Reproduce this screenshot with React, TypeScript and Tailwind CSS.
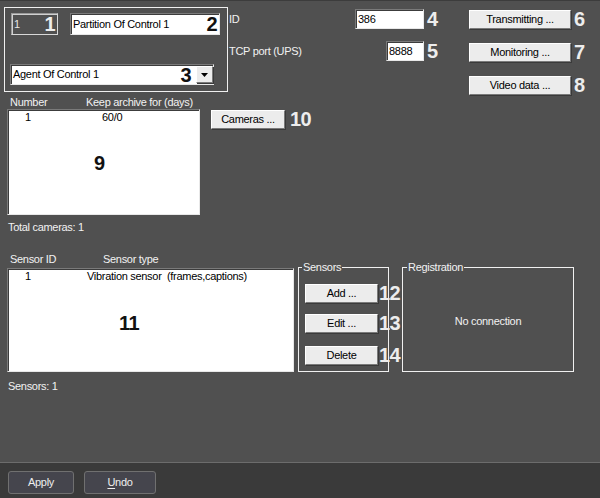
import React from "react";

const sunkenWhite =
  "bg-white border border-t-[#7a7a7a] border-l-[#7a7a7a] border-b-[#e8e8e8] border-r-[#e8e8e8] shadow-[inset_1px_1px_0_#3c3c3c]";
const raised =
  "bg-[#ececec] border border-t-white border-l-white border-b-[#7a7a7a] border-r-[#7a7a7a] shadow-[1px_1px_0_#3a3a3a] text-black flex items-center justify-center shrink-0";

function Num({ children, dark = false, className = "" }: { children: React.ReactNode; dark?: boolean; className?: string }) {
  return (
    <span
      className={
        (dark ? "text-[#111111] " : "text-[#ededed] ") +
        "font-bold text-[20px] leading-[20px] tracking-[-0.5px] shrink-0 " +
        className
      }
    >
      {children}
    </span>
  );
}

export default function App() {
  return (
    <div className="w-[600px] h-[498px] bg-[#505050] flex flex-col overflow-hidden font-['Liberation_Sans',Arial,sans-serif] text-[11px] leading-[13px] tracking-[-0.3px] text-[#f2f2f2]">
      <div className="h-px bg-[#3c3c3c] shrink-0" />
      <div className="flex-1 flex flex-col">
        {/* Row A */}
        <div className="flex items-start h-[92px] shrink-0">
          <div className="mt-[6px] ml-[4px] w-[224px] h-[85px] border border-[#f0f0f0] flex flex-col pl-[6px] pt-[5px] shrink-0">
            <div className="flex gap-[12px]">
              <div className="w-[47px] h-[22px] bg-[#505050] border border-t-[#9a9a9a] border-l-[#9a9a9a] border-b-[#d8d8d8] border-r-[#d8d8d8] shadow-[inset_1px_1px_0_#d0d0d0] flex items-center justify-between pl-[2px] pr-[2px]">
                <span className="text-[#e6e6e6]">1</span>
                <Num>1</Num>
              </div>
              <div className={sunkenWhite + " w-[150px] h-[22px] flex items-center justify-between pl-[2px] pr-[2px] text-black"}>
                <span>Partition Of Control 1</span>
                <Num dark>2</Num>
              </div>
            </div>
            <div className={sunkenWhite + " mt-[29px] -ml-[1px] w-[204px] h-[21px] flex items-center pl-[2px] text-black"}>
              <span className="flex-1">Agent Of Control 1</span>
              <Num dark>3</Num>
              <div className={raised + " ml-[5px] w-[17px] h-[17px]"}>
                <svg width="7" height="4" viewBox="0 0 7 4">
                  <path d="M0 0H7L3.5 4Z" fill="#000" />
                </svg>
              </div>
            </div>
          </div>

          <div className="ml-[1px] mt-[8px] w-[212px] flex flex-col gap-[12px] shrink-0">
            <div className="flex items-center h-[20px]">
              <span className="flex-1">ID</span>
              <div className={sunkenWhite + " w-[69px] h-[20px] pl-[2px] text-black flex items-center"}>386</div>
              <Num className="ml-[3px] w-[14px]">4</Num>
            </div>
            <div className="flex items-center h-[20px]">
              <span className="flex-1">TCP port (UPS)</span>
              <div className={sunkenWhite + " w-[38px] h-[20px] pl-[2px] text-black flex items-center"}>8888</div>
              <Num className="ml-[3px] w-[14px]">5</Num>
            </div>
          </div>

          <div className="ml-[28px] mt-[8px] flex flex-col gap-[13px]">
            <div className="flex items-center">
              <div className={raised + " w-[102px] h-[19px]"}>Transmitting ...</div>
              <Num className="ml-[3px]">6</Num>
            </div>
            <div className="flex items-center">
              <div className={raised + " w-[102px] h-[19px]"}>Monitoring ...</div>
              <Num className="ml-[3px]">7</Num>
            </div>
            <div className="flex items-center">
              <div className={raised + " w-[102px] h-[19px]"}>Video data ...</div>
              <Num className="ml-[3px]">8</Num>
            </div>
          </div>
        </div>

        {/* Row B: cameras */}
        <div className="flex items-start pl-[7px] shrink-0">
          <div className="w-[193px] flex flex-col shrink-0">
            <div className="h-[16px] pt-[3px] flex">
              <span className="w-[79px] pl-[3px]">Number</span>
              <span>Keep archive for (days)</span>
            </div>
            <div className={sunkenWhite + " relative h-[106px] text-black"}>
              <div className="flex pt-[1px]">
                <span className="w-[94px] pl-[17px]">1</span>
                <span>60/0</span>
              </div>
              <Num dark className="absolute left-[86px] top-[43px]">9</Num>
            </div>
            <div className="mt-[6px] pl-[1px]">Total cameras: 1</div>
          </div>
          <div className="ml-[11px] mt-[16px] flex items-center">
            <div className={raised + " w-[74px] h-[19px]"}>Cameras ...</div>
            <Num className="ml-[5px]">10</Num>
          </div>
        </div>

        {/* Row C: sensors */}
        <div className="flex items-start pl-[7px] mt-[19px] shrink-0">
          <div className="w-[287px] flex flex-col shrink-0">
            <div className="h-[15px] flex">
              <span className="w-[96px] pl-[3px]">Sensor ID</span>
              <span>Sensor type</span>
            </div>
            <div className={sunkenWhite + " relative h-[104px] text-black"}>
              <div className="flex pt-[1px]">
                <span className="w-[79px] pl-[17px]">1</span>
                <span className="whitespace-pre">Vibration sensor  (frames,captions)</span>
              </div>
              <Num dark className="absolute left-[111px] top-[44px]">11</Num>
            </div>
            <div className="mt-[8px] pl-[1px]">Sensors: 1</div>
          </div>

          <div className="relative ml-[4px] mt-[14px] w-[91px] h-[105px] border border-[#f0f0f0] flex flex-col pl-[6px] shrink-0">
            <span className="absolute left-[3px] top-[-7px] px-[1px] bg-[#505050]">Sensors</span>
            <div className="flex items-center mt-[15px]">
              <div className={raised + " w-[73px] h-[19px]"}>Add ...</div>
              <Num className="ml-[1px] relative">12</Num>
            </div>
            <div className="flex items-center mt-[10px]">
              <div className={raised + " w-[73px] h-[19px]"}>Edit ...</div>
              <Num className="ml-[1px] relative">13</Num>
            </div>
            <div className="flex items-center mt-[12px]">
              <div className={raised + " w-[73px] h-[19px]"}>Delete</div>
              <Num className="ml-[1px] relative">14</Num>
            </div>
          </div>

          <div className="relative ml-[13px] mt-[14px] w-[172px] h-[105px] border border-[#f0f0f0] flex items-center justify-center pt-[3px] shrink-0">
            <span className="absolute left-[4px] top-[-7px] px-[1px] bg-[#505050]">Registration</span>
            <span>No connection</span>
          </div>
        </div>
      </div>

      {/* Footer */}
      <div className="h-[36px] shrink-0 border-t border-[#6c6c6c] bg-[#3a3a3a] flex items-start pt-[8px] pl-[8px] gap-[10px]">
        <button className="w-[66px] h-[23px] bg-[#45454d] border border-[#707070] rounded-[3px] text-[#eeeeee] text-[11px] flex items-center justify-center">
          Apply
        </button>
        <button className="w-[72px] h-[23px] bg-[#45454d] border border-[#707070] rounded-[3px] text-[#eeeeee] text-[11px] flex items-center justify-center">
          <span>
            <span className="underline underline-offset-2">U</span>ndo
          </span>
        </button>
      </div>
    </div>
  );
}
